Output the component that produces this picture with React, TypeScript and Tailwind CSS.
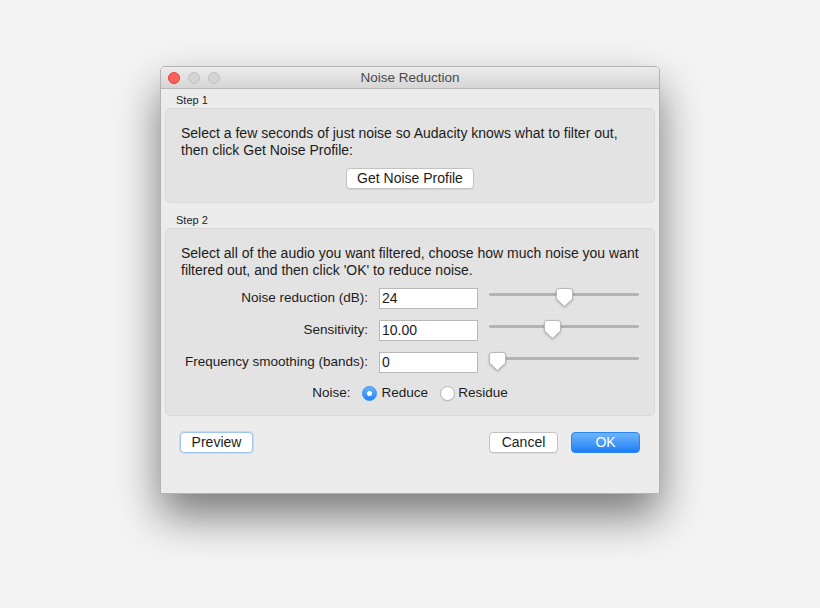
import React from 'react';

const font = { fontFamily: '"Liberation Sans", Arial, sans-serif' };

interface SliderRow {
  label: string;
  value: string;
  pct: number;
}

const rows: SliderRow[] = [
  { label: 'Noise reduction (dB):', value: '24', pct: 0.5 },
  { label: 'Sensitivity:', value: '10.00', pct: 10 / 24 },
  { label: 'Frequency smoothing (bands):', value: '0', pct: 0 },
];

// Mac style slider thumb, pointing down
const Thumb = () => (
  <svg width="17" height="19" viewBox="0 0 17 19" className="drop-shadow-[0_1px_1px_rgba(0,0,0,0.25)]">
    <path
      d="M3 0.5 H14 Q16.5 0.5 16.5 3 V11 L8.5 18.3 L0.5 11 V3 Q0.5 0.5 3 0.5 Z"
      fill="#ffffff"
      stroke="#b9b9b9"
    />
  </svg>
);

const Slider = ({ pct }: { pct: number }) => (
  <div className="relative h-[21px] w-[150px]">
    <div className="absolute left-0 right-0 top-[5px] h-[3px] rounded-full bg-[#b3b3b3]" />
    <div className="absolute top-0" style={{ left: `${pct * 133}px` }}>
      <Thumb />
    </div>
  </div>
);

const Radio = ({ checked }: { checked: boolean }) =>
  checked ? (
    <span className="flex h-[15px] w-[15px] items-center justify-center rounded-full border border-[#3a8ff0] bg-gradient-to-b from-[#6ab4fb] to-[#1f83f4]">
      <span className="h-[5px] w-[5px] rounded-full bg-white" />
    </span>
  ) : (
    <span className="h-[15px] w-[15px] rounded-full border border-[#b4b4b4] bg-white shadow-[0_1px_0_rgba(0,0,0,0.05)]" />
  );

export default function App() {
  return (
    <div className="min-h-[608px] w-full bg-[#f4f4f4] pt-[66px] text-[14px] text-[#1c1c1c]" style={font}>
      {/* Window */}
      <div className="mx-auto h-[428px] w-[500px] overflow-hidden rounded-t-[5px] border border-[#b3b3b3] bg-[#ececec] shadow-[0_22px_44px_rgba(0,0,0,0.5)]">
        {/* Title bar */}
        <div className="relative flex h-[22px] items-center border-b border-[#b8b8b8] bg-gradient-to-b from-[#ececec] to-[#d6d6d6]">
          <div className="flex gap-[8px] pl-[7px]">
            <span className="h-[12px] w-[12px] rounded-full border border-[#e0443e] bg-[#fc605b]" />
            <span className="h-[12px] w-[12px] rounded-full border border-[#c4c4c4] bg-[#d4d4d4]" />
            <span className="h-[12px] w-[12px] rounded-full border border-[#c4c4c4] bg-[#d4d4d4]" />
          </div>
          <div className="absolute inset-0 flex items-center justify-center pt-[1px] text-[13.5px] text-[#4a4a4a]">
            Noise Reduction
          </div>
        </div>

        {/* Step 1 */}
        <div className="px-[15px] pt-[4px] text-[11px] leading-[14px]">Step 1</div>
        <div className="mx-[4px] mt-[1px] flex flex-col rounded-[5px] border border-[#dadada] bg-[#e3e3e3] px-[15px] pb-[13px] pt-[16px]">
          <p className="leading-[17px]">
            Select a few seconds of just noise so Audacity knows what to filter out,
            <br />
            then click Get Noise Profile:
          </p>
          <div className="mt-[9px] flex justify-center">
            <button className="h-[21px] w-[128px] rounded-[4px] border border-[#c2c2c2] bg-white leading-[19px] shadow-[0_1px_0_rgba(0,0,0,0.06)]">
              Get Noise Profile
            </button>
          </div>
        </div>

        {/* Step 2 */}
        <div className="px-[15px] pt-[10px] text-[11px] leading-[14px]">Step 2</div>
        <div className="mx-[4px] mt-[1px] flex flex-col rounded-[5px] border border-[#dadada] bg-[#e3e3e3] px-[15px] pb-[14px] pt-[16px]">
          <p className="leading-[17px]">
            Select all of the audio you want filtered, choose how much noise you want
            <br />
            filtered out, and then click 'OK' to reduce noise.
          </p>
          <div className="mt-[9px] grid grid-cols-[187px_99px_150px] gap-x-[11px] gap-y-[11px] text-[13.5px]">
            {rows.map((r) => (
              <React.Fragment key={r.label}>
                <div className="flex h-[21px] items-center justify-end">{r.label}</div>
                <div className="flex h-[21px] items-center border border-[#b9b9b9] bg-white pl-[2px] text-[14px]">{r.value}</div>
                <Slider pct={r.pct} />
              </React.Fragment>
            ))}
          </div>
          <div className="mt-[12px] flex h-[16px] items-center justify-center text-[13.5px]">
            <span className="mr-[11px]">Noise:</span>
            <Radio checked />
            <span className="ml-[5px] mr-[12px]">Reduce</span>
            <Radio checked={false} />
            <span className="ml-[3px]">Residue</span>
          </div>
        </div>

        {/* Buttons */}
        <div className="mt-[16px] flex items-center px-[19px]">
          <button className="h-[21px] w-[73px] rounded-[4px] border border-[#9fc6ef] bg-white leading-[19px] shadow-[0_0_0_1px_rgba(140,185,240,0.35)]">
            Preview
          </button>
          <div className="flex-1" />
          <button className="h-[21px] w-[69px] rounded-[4px] border border-[#c2c2c2] bg-white leading-[19px] shadow-[0_1px_0_rgba(0,0,0,0.06)]">
            Cancel
          </button>
          <button className="ml-[13px] h-[21px] w-[69px] rounded-[4px] border border-[#2a84f5] bg-gradient-to-b from-[#6cb3fa] to-[#1a7ff7] leading-[19px] text-white">
            OK
          </button>
        </div>
      </div>
    </div>
  );
}
